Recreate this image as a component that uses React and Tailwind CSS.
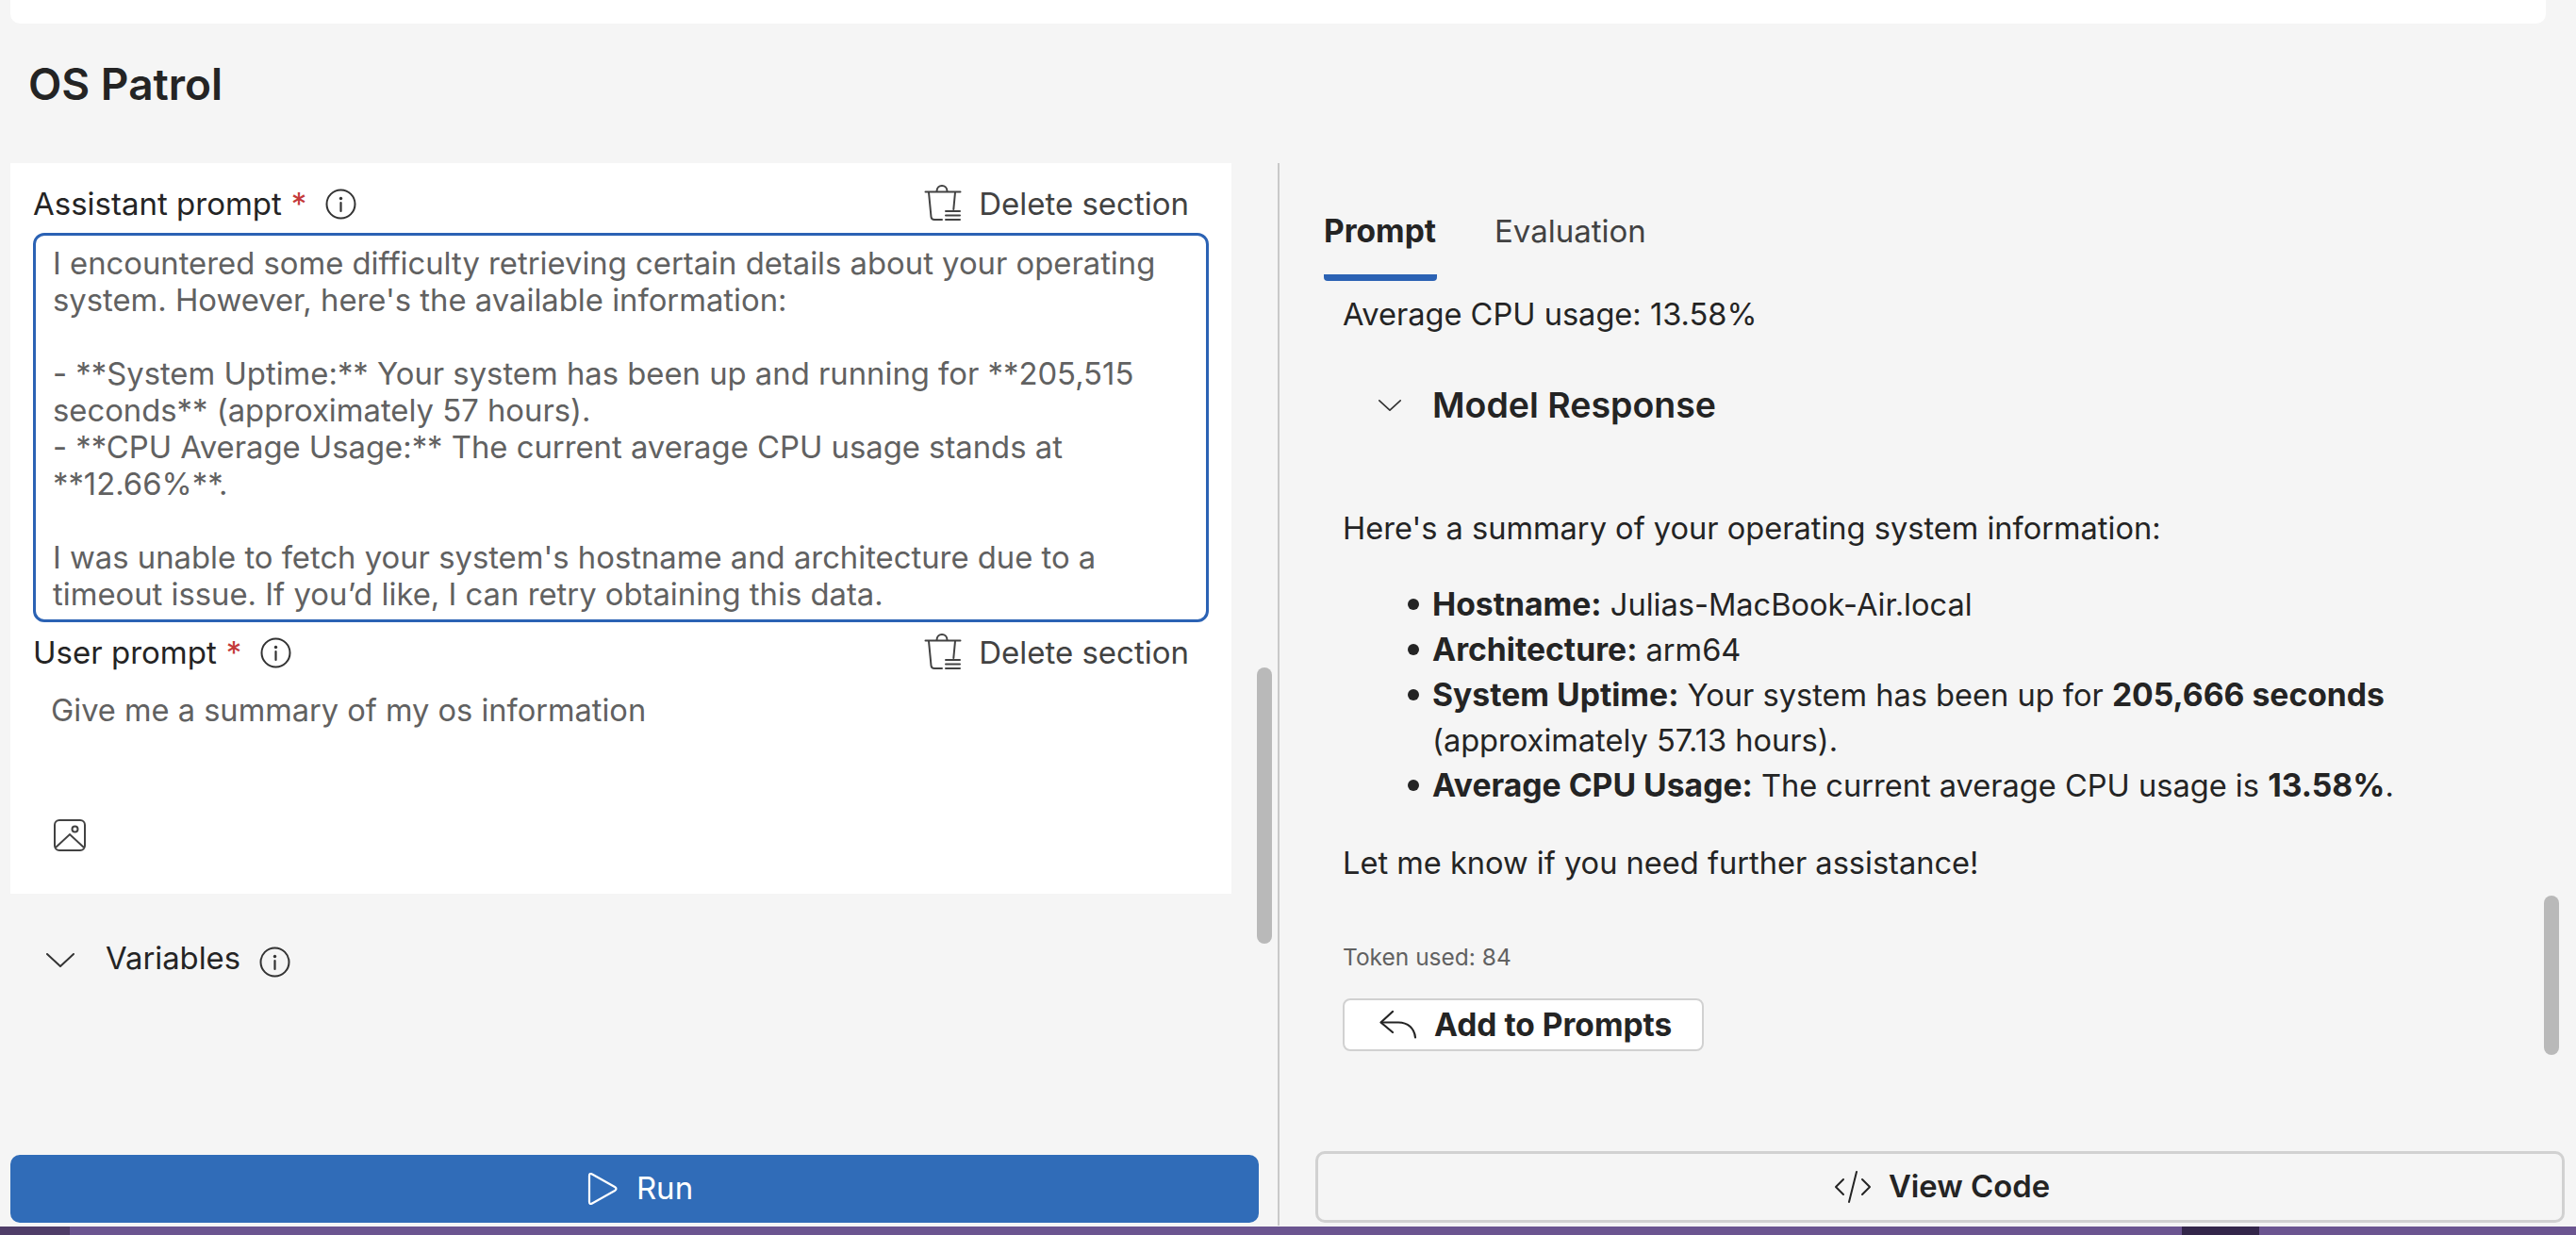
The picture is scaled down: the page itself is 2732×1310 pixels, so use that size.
const font = { fontFamily: '"Inter", "Liberation Sans", sans-serif' };

const Info = ({ className = "" }) => (
  <svg className={className} width="33" height="33" viewBox="0 0 33 33" fill="none">
    <circle cx="16.5" cy="16.5" r="15" stroke="#333" strokeWidth="2" />
    <circle cx="16.5" cy="10.5" r="1.7" fill="#333" />
    <path d="M16.5 15v9" stroke="#333" strokeWidth="2.2" strokeLinecap="round" />
  </svg>
);

const Trash = () => (
  <svg width="40" height="40" viewBox="0 0 40 40" fill="none" stroke="#424242" strokeWidth="2" strokeLinecap="round">
    <path d="M1.5 7.5h37" />
    <path d="M13.5 7c0-8 11-8 11 0" />
    <path d="M5 8l2.5 26c.2 2 1.5 3 3.5 3h8" />
    <path d="M33 8l-1.7 18" />
    <path d="M23 28h15M23 32.500h15M23 37h15" />
  </svg>
);

const DeleteSection = () => (
  <div className="flex items-center gap-[18px] text-[#424242] mr-[45px]">
    <Trash />
    <span className="text-[33px] leading-[40px]">Delete section</span>
  </div>
);

const Star = () => <span className="text-[#c43a3a] ml-[10px]">*</span>;

const ImageIcon = () => (
  <svg width="34" height="34" viewBox="0 0 34 34" fill="none" stroke="#424242" strokeWidth="2">
    <rect x="1" y="1" width="32" height="32" rx="5" />
    <path d="M2 30L17 16l15 14" />
    <circle cx="22.500" cy="10.500" r="3" />
  </svg>
);

const Chevron = ({ w = 30, h = 15 }) => (
  <svg width={w} height={h} viewBox="0 0 30 15" fill="none" stroke="#333" strokeWidth="2" strokeLinecap="round">
    <path d="M1 1l14 13L29 1" />
  </svg>
);

const Li = ({ children }) => (
  <li className="relative">
    <span className="absolute left-[-26px] top-[18px] w-[12px] h-[12px] rounded-full bg-[#242424]" />
    {children}
  </li>
);

const B = ({ children }) => <b className="font-bold text-[33.7px]">{children}</b>;

export default function App() {
  return (
    <div style={font} className="w-[2732px] h-[1310px] bg-[#f5f5f5] flex flex-col overflow-hidden relative text-[#242424]">
      <div className="h-[25px] ml-[11px] w-[2689px] bg-white rounded-b-[10px] shrink-0" />
      <div className="h-[148px] shrink-0 pl-[30px] pt-[36px]">
        <h1 className="text-[46px] leading-[56px] font-semibold">OS Patrol</h1>
      </div>
      <div className="flex flex-1 min-h-0">
        <div className="w-[1355px] shrink-0 flex flex-col">
          <div className="ml-[11px] w-[1295px] h-[775px] bg-white shrink-0 pl-[24px] flex flex-col">
            <div className="h-[74px] shrink-0 pt-[12px] flex items-center justify-between">
              <div className="flex items-center text-[33px] leading-[40px]">
                <span>Assistant prompt</span>
                <Star />
                <Info className="ml-[20px]" />
              </div>
              <DeleteSection />
            </div>
            <div className="w-[1247px] h-[413px] shrink-0 border-[3px] border-[#2b62b4] rounded-[12px] pl-[18px] pt-[10px] text-[32.8px] leading-[39px] text-[#616161] whitespace-pre">
              {`I encountered some difficulty retrieving certain details about your operating
system. However, here's the available information:

- **System Uptime:** Your system has been up and running for **205,515
seconds** (approximately 57 hours).
- **CPU Average Usage:** The current average CPU usage stands at
**12.66%**.

I was unable to fetch your system's hostname and architecture due to a
timeout issue. If you’d like, I can retry obtaining this data.`}
            </div>
            <div className="h-[62px] shrink-0 pt-[2px] flex items-center justify-between">
              <div className="flex items-center text-[33px] leading-[40px]">
                <span>User prompt</span>
                <Star />
                <Info className="ml-[20px]" />
              </div>
              <DeleteSection />
            </div>
            <div className="pl-[19px] pt-[11px] text-[32.6px] leading-[40px] text-[#616161]">Give me a summary of my os information</div>
            <div className="pl-[22px] pt-[96px]"><ImageIcon /></div>
          </div>
          <div className="flex items-center pl-[49px] pt-[52px]">
            <Chevron />
            <span className="ml-[33px] text-[32.8px] leading-[40px] -mt-[6px]">Variables</span>
            <Info className="ml-[20px] mt-[4px]" />
          </div>
          <div className="mt-auto mb-[4px] ml-[11px] w-[1324px] h-[72px] bg-[#306cb8] rounded-[10px] flex items-center justify-center gap-[20px] pl-[12px] text-white text-[33px]">
            <svg width="32" height="34" viewBox="0 0 32 34" fill="none" stroke="#fff" strokeWidth="2.200" strokeLinejoin="round">
              <path d="M2 3c0-2 1.500-2.500 3-1.500l24 13.500c2 1.200 2 2.800 0 4L5 32.500c-1.500 1-3 .5-3-1.500z" />
            </svg>
            <span>Run</span>
          </div>
        </div>
        <div className="w-[2px] bg-[#c9c9c9] shrink-0 mb-[1px]" />
        <div className="flex-1 flex flex-col min-w-0 relative">
          <div className="flex pl-[47px] h-[125px] shrink-0 text-[33px] pt-[50px] leading-[44px]">
            <div className="w-[120px] h-[75px] font-bold text-[33.5px] border-b-[7px] border-[#2b62b4] rounded-b-[4px]">Prompt</div>
            <div className="ml-[61px] text-[#424242]">Evaluation</div>
          </div>
          <div className="pl-[67px] text-[32.6px] leading-[48px]">
            <div className="mt-[11px]">Average CPU usage: 13.58%</div>
            <div className="flex items-center mt-[49px] h-[48px]">
              <span className="ml-[38px]"><Chevron w={24} h={12} /></span>
              <span className="ml-[33px] text-[37.5px] font-semibold">Model Response</span>
            </div>
            <div className="mt-[82px]">Here's a summary of your operating system information:</div>
            <ul className="ml-[95px] mt-[33px]">
              <Li><B>Hostname:</B> Julias-MacBook-Air.local</Li>
              <Li><B>Architecture:</B> arm64</Li>
              <Li>
                <B>System Uptime:</B> Your system has been up for <B>205,666 seconds</B>
                <br />(approximately 57.13 hours).
              </Li>
              <Li><B>Average CPU Usage:</B> The current average CPU usage is <B>13.58%</B>.</Li>
            </ul>
            <div className="mt-[34px]">Let me know if you need further assistance!</div>
            <div className="mt-[60px] text-[24.5px] leading-[32px] text-[#616161]">Token used: 84</div>
            <div className="mt-[28px] w-[383px] h-[56px] bg-white border-[2px] border-[#d1d1d1] rounded-[8px] flex items-center pl-[37px] gap-[18px]">
              <svg width="40" height="30" viewBox="0 0 40 30" fill="none" stroke="#242424" strokeWidth="2.200" strokeLinecap="round" strokeLinejoin="round">
                <path d="M14 1L1.500 12.500 14 23" />
                <path d="M2 12.500h18c10 0 17 6 18 16" />
              </svg>
              <span className="text-[33.5px] font-bold">Add to Prompts</span>
            </div>
          </div>
          <div className="mt-auto mb-[4px] ml-[38px] w-[1325px] h-[76px] border-[3px] border-[#d1d1d1] rounded-[10px] flex items-center justify-center gap-[18px] pl-[4px] text-[32.8px] font-semibold">
            <svg width="40" height="36" viewBox="0 0 40 36" fill="none" stroke="#242424" strokeWidth="2" strokeLinecap="round" strokeLinejoin="round">
              <path d="M10 10L2 18l8 8" />
              <path d="M30 10l8 8-8 8" />
              <path d="M24 2L16 34" />
            </svg>
            <span>View Code</span>
          </div>
        </div>
      </div>
      <div className="h-[9px] shrink-0 bg-[#6b5590] flex">
        <div className="w-[74px] bg-[#4f3d68]" />
        <div className="ml-[2240px] w-[82px] bg-[#33264a]" />
      </div>
      <div className="absolute left-[1333px] top-[708px] w-[16px] h-[293px] rounded-full bg-[#b9b9b9]" />
      <div className="absolute left-[2698px] top-[950px] w-[16px] h-[169px] rounded-full bg-[#b9b9b9]" />
    </div>
  );
}
